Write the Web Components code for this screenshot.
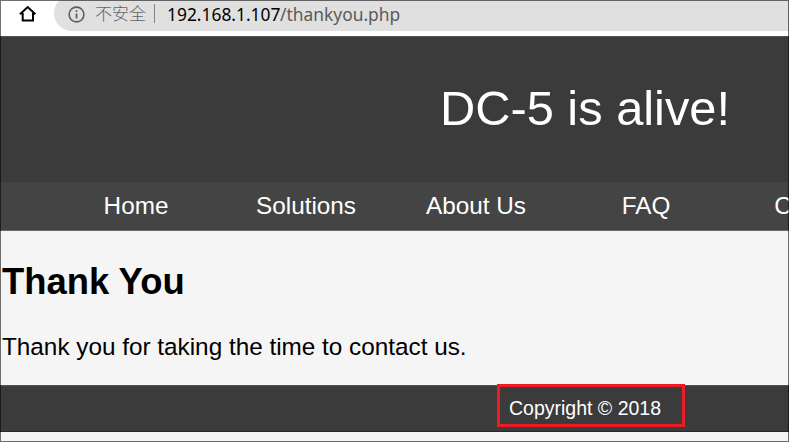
<!DOCTYPE html>
<html lang="en"><head><meta charset="utf-8"><title>DC-5 is alive!</title>
<style>html,body{margin:0;height:100%;overflow:hidden;font-family:"Liberation Sans",Arial,sans-serif}</style></head>
<body>
<browser-window>
<address-bar slot="bar" status="不安全"><span slot="host">192.168.1.107</span><span slot="path">/thankyou.php</span></address-bar>
<site-header>DC-5 is alive!</site-header>
<site-nav><nav-item>Home</nav-item><nav-item>Solutions</nav-item><nav-item>About Us</nav-item><nav-item>FAQ</nav-item><nav-item>Contact</nav-item></site-nav>
<page-content><span slot="title">Thank You</span>Thank you for taking the time to contact us.</page-content>
<site-footer>Copyright © 2018</site-footer>
</browser-window>
<script>
function define(name, html, setup) {
  customElements.define(name, class extends HTMLElement {
    constructor() {
      super();
      this.attachShadow({mode: 'open'}).innerHTML = html;
      if (setup) setup(this);
    }
  });
}
define('browser-window', `<style>
:host{display:block;position:relative;box-sizing:border-box;width:789px;height:442px;overflow:hidden;background:#f5f5f5}
.page{width:1170px}
.frame{position:absolute;inset:0;border:1px solid rgba(0,0,0,.56);pointer-events:none}
</style><slot name="bar"></slot><div class="page"><slot></slot></div><div class="frame"></div>`);
define('address-bar', `<style>
:host{display:flex;box-sizing:border-box;height:36px;background:#fff;padding-bottom:5px;overflow:hidden}
.home{width:20px;height:20px;margin:4px 16px 0 18px;flex:none}
.pill{flex:1;height:36px;margin-top:-5px;border-radius:18px 0 0 18px;background:#e0e0e0;display:flex;align-items:center;padding-left:14px;box-sizing:border-box;white-space:nowrap}
.info{width:17px;height:17px;margin-top:3px;flex:none}
.status{font:300 17px/24px "Noto Sans CJK SC",sans-serif;color:#5f6368;margin:0 0 0 10px;width:51px}
.sep{width:1px;height:19px;background:#858585;margin:1px 12px 0 8px}
.url{font:17.4px/24px "Noto Sans",sans-serif;color:#5a5a5a;margin-top:2px;display:flex}
.host{color:#000;width:113px}
</style>
<svg class="home" viewBox="0 0 20 20"><path d="M2 10.2 9.7 3l7.7 7.2M4.7 9v7.6H15V9" fill="none" stroke="#000" stroke-width="2"/></svg>
<div class="pill"><svg class="info" viewBox="0 0 17 17"><circle cx="8.5" cy="8.5" r="7.4" fill="none" stroke="#5c5c5c" stroke-width="1.6"/><path d="M8.5 7.5v5M8.5 4.3v1.8" stroke="#5c5c5c" stroke-width="1.7"/></svg>
<span class="status"></span><span class="sep"></span><span class="url"><span class="host"><slot name="host"></slot></span><slot name="path"></slot></span></div>`,
el => { el.shadowRoot.querySelector('.status').textContent = el.getAttribute('status'); });
define('site-header', `<style>
:host{display:flex;box-sizing:border-box;height:146px;padding-bottom:3px;justify-content:center;align-items:center;background:#3b3b3b;border-top:1px solid #535353;color:#fff;font-size:48.8px;line-height:56px}
</style><slot></slot>`);
define('site-nav', `<style>
:host{display:flex;box-sizing:border-box;height:49px;padding-left:51px;background:#444;border-bottom:1px solid #686868}
</style><slot></slot>`);
define('nav-item', `<style>
:host{display:flex;width:170px;justify-content:center;align-items:center;color:#fff;font-size:24.3px;line-height:28px}
</style><slot></slot>`);
define('page-content', `<style>
:host{display:block;box-sizing:border-box;height:154px;padding:30px 0 0 2px;background:#f5f5f5;color:#000}
h1{margin:0;font-size:36.4px;line-height:42px}
p{margin:30px 0 0;font-size:24.3px;line-height:28px}
</style><h1><slot name="title"></slot></h1><p><slot></slot></p>`);
define('site-footer', `<style>
:host{display:flex;box-sizing:border-box;height:47px;padding-bottom:1px;background:#3b3b3b;border-top:1px solid #535353;border-bottom:1px solid #282828;justify-content:center;align-items:center;color:#fff;font-size:19.5px;line-height:22px;position:relative}
.mark{position:absolute;left:497px;top:-2px;width:188px;height:43px;box-sizing:border-box;border:3px solid #ed1c24}
</style><slot></slot><div class="mark"></div>`);
</script></body></html>
